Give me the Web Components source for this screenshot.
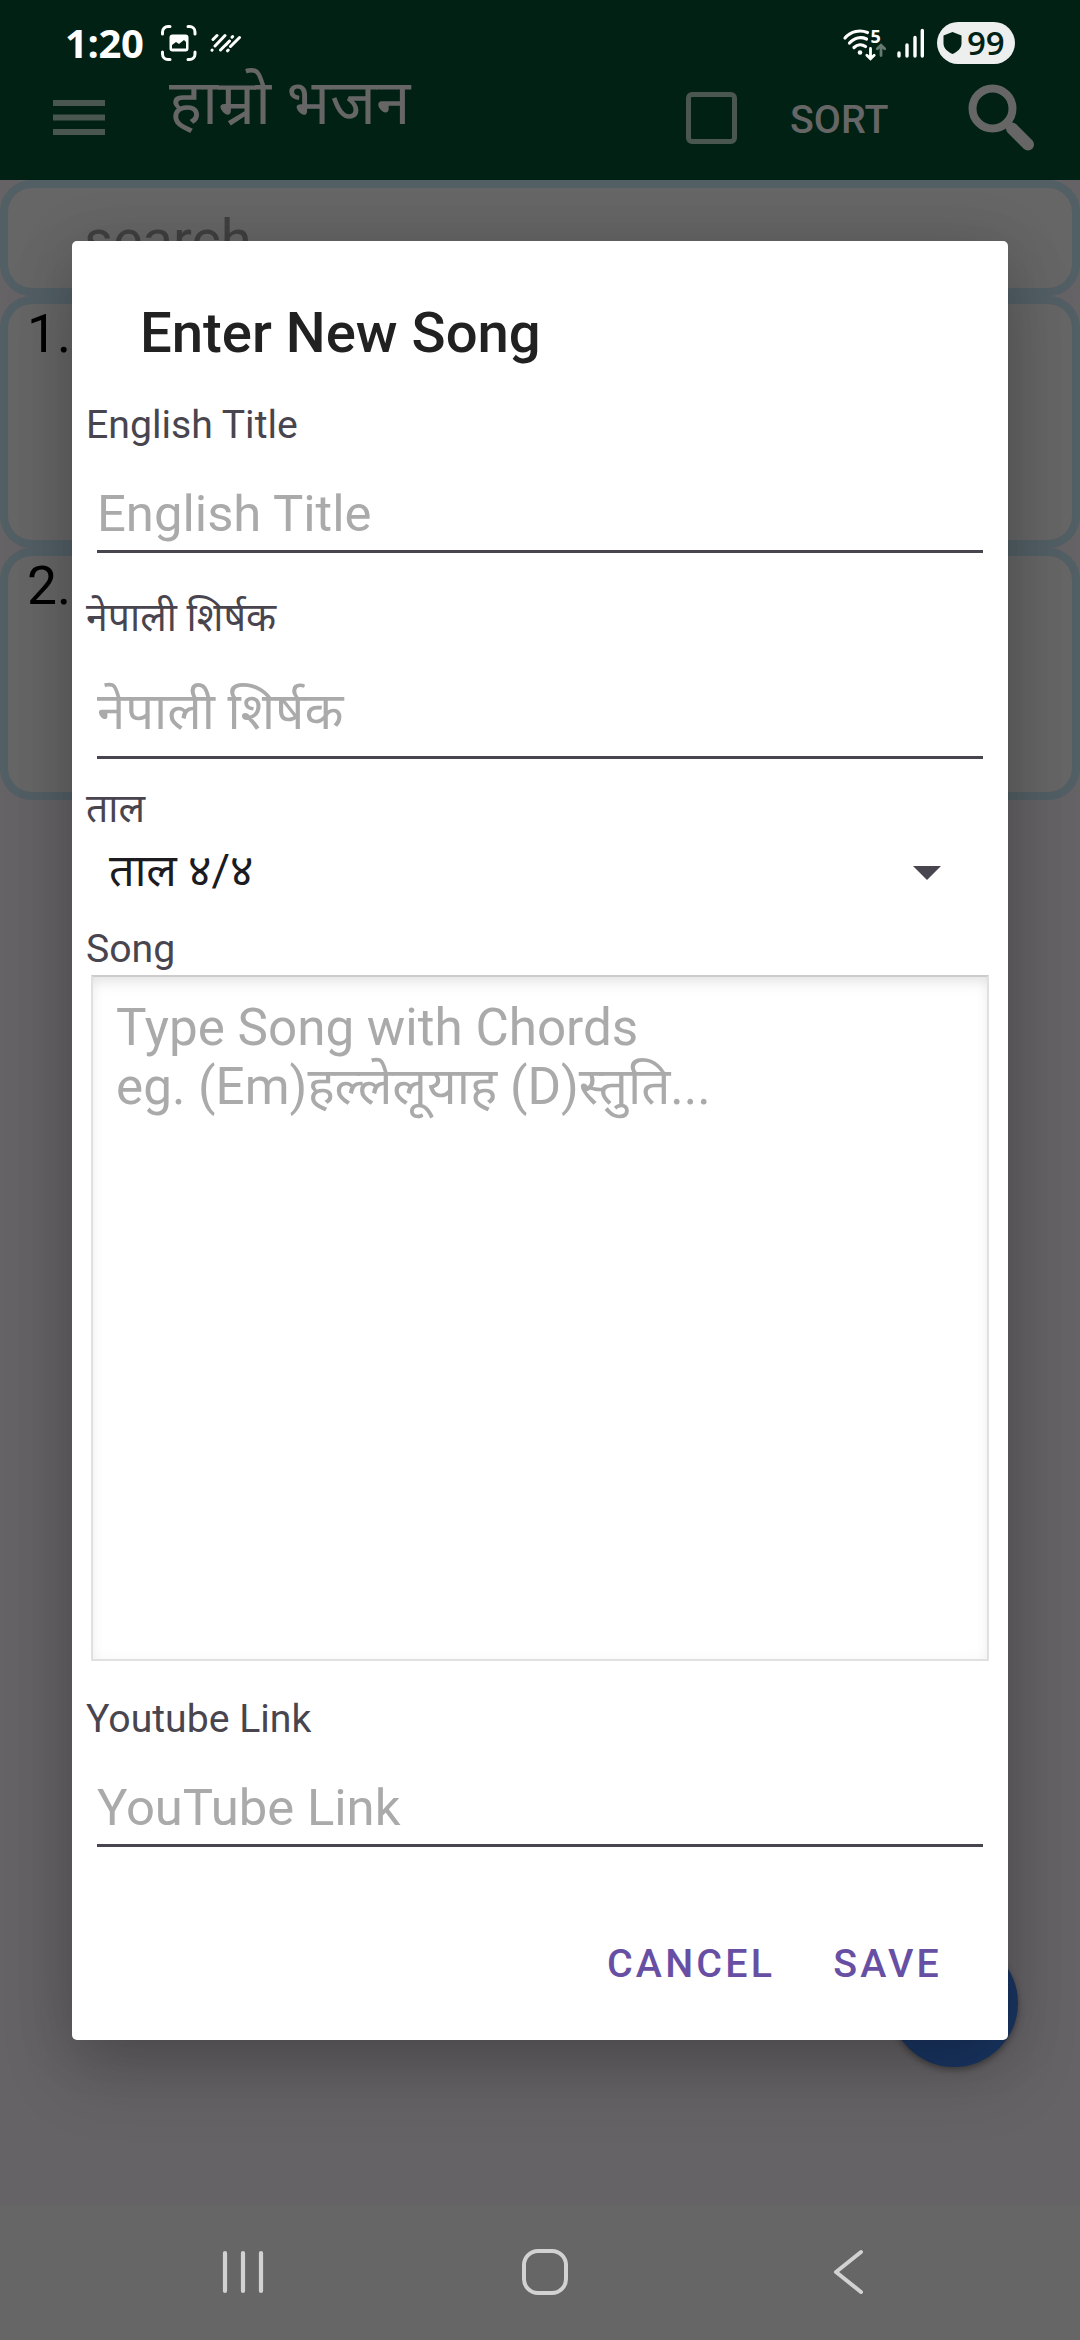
<!DOCTYPE html>
<html lang="ne">
<head>
<meta charset="utf-8">
<title>हाम्रो भजन</title>
<style>
    html, body {
        margin: 0;
        width: 1080px;
        height: 2340px;
        overflow: hidden;
        font-family: Roboto, "Noto Sans Devanagari", "Noto Sans", sans-serif;
    }
</style>
</head>
<body>
<song-app>
    <status-bar slot="status" time="1:20" battery="99"></status-bar>
    <app-bar slot="bar">हाम्रो भजन<span slot="action">SORT</span></app-bar>
    <list-card kind="search">search</list-card>
    <list-card>1.</list-card>
    <list-card>2.</list-card>
    <song-dialog slot="dialog">
        <span slot="title">Enter New Song</span>
        <text-field label="English Title">English Title</text-field>
        <text-field label="नेपाली शिर्षक" tall>नेपाली शिर्षक</text-field>
        <select-field label="ताल">ताल ४/४</select-field>
        <text-box label="Song">Type Song with Chords<br>eg. (Em)हल्लेलूयाह (D)स्तुति...</text-box>
        <text-field label="Youtube Link" last>YouTube Link</text-field>
        <dialog-button slot="actions">CANCEL</dialog-button>
        <dialog-button slot="actions">SAVE</dialog-button>
    </song-dialog>
    <nav-bar slot="nav"></nav-bar>
</song-app>

<script>
"use strict"

class Base extends HTMLElement {
    constructor() {
        super()
        const template = document.createElement("template")
        template.innerHTML = this.render()
        const attachShadow = this.attachShadow({ mode: "open" })
        attachShadow.append(template.content.cloneNode(true))
    }
    render() {
        return "<slot></slot>"
    }
}

class SongApp extends Base {
    render() {
        return `
            <style>
                :host {
                    display: flex;
                    flex-direction: column;
                    position: relative;
                    width: 1080px;
                    height: 2340px;
                    overflow: hidden;
                    background: #666366;
                }
                .list {
                    flex: 1;
                    display: flex;
                    flex-direction: column;
                }
                .status {
                    position: absolute;
                    top: 0;
                    left: 0;
                    right: 0;
                }
                .fab {
                    position: absolute;
                    left: 890px;
                    top: 1939px;
                    width: 128px;
                    height: 128px;
                    border-radius: 50%;
                    background: #1a3663;
                    box-shadow: 0 3px 6px rgba(0, 0, 0, .35);
                }
                .dialog {
                    position: absolute;
                    left: 72px;
                    right: 72px;
                    top: 241px;
                }
            </style>
            <slot name="bar"></slot>
            <div class="list"><slot></slot></div>
            <slot name="nav"></slot>
            <div class="status"><slot name="status"></slot></div>
            <div class="fab"></div>
            <div class="dialog"><slot name="dialog"></slot></div>
        `
    }
}

class StatusBar extends Base {
    render() {
        return `
            <style>
                :host {
                    display: flex;
                    align-items: center;
                    height: 86px;
                    padding: 0 65px 0 65px;
                    box-sizing: border-box;
                    color: #fff;
                }
                svg {
                    display: block;
                }
                .time {
                    width: 96px;
                    font: 700 40px/50px "Open Sans", "Noto Sans", sans-serif;
                    letter-spacing: -.4px;
                }
                .space {
                    flex: 1;
                }
                .pill {
                    display: flex;
                    align-items: center;
                    width: 78px;
                    height: 42px;
                    margin-left: 13px;
                    padding-left: 6px;
                    box-sizing: border-box;
                    border-radius: 21px;
                    background: #ecefed;
                    color: #002114;
                    font: 600 33px/42px "Open Sans", "Noto Sans", sans-serif;
                }
                .pill svg {
                    margin-right: 5px;
                }
            </style>
            <div class="time"></div>
            <svg width="36" height="36" viewBox="0 0 36 36" fill="none" stroke="#fff" stroke-width="3" stroke-linecap="round">
                <path d="M1.5 9V7a5.500 5.500 0 0 1 5.500-5.500H9M27 1.500h1.500a5.500 5.500 0 0 1 5.500 5.500V9M34 27v2a5.500 5.500 0 0 1-5.500 5.500H27M9 34.500H7A5.500 5.500 0 0 1 1.500 29V27"/>
                <rect x="8.500" y="9.500" width="19" height="17" rx="3" fill="#fff" stroke="none"/>
                <path d="M11 23.500v-3.500l4-3 3 2 5-4 2 2v6.500z" fill="#002114" stroke="none"/>
            </svg>
            <svg style="margin-left:13px" width="32" height="20" viewBox="0 0 32 20" stroke="#fff" stroke-width="3" stroke-linecap="round">
                <path d="M3 6.500 7 2.500M5 13 15 2.500M2 17.200l.1-.1M10.500 17 19.500 8M22 4.200l.6-.6M17.500 17.800l.7-.7M20.500 13.500 29.500 4.500M16 11.800l3.500-3.800" fill="none"/>
            </svg>
            <div class="space"></div>
            <svg width="46" height="36" viewBox="0 0 46 36" fill="none">
                <g stroke="#fff" stroke-width="3.200" stroke-linecap="round">
                    <path d="M3 13C9 6 18 4.500 25.500 7.500M7.500 18C12.500 12.500 19 11.500 24.500 14M12 22.500c3.500-3.500 8-3.500 11.500-1"/>
                    <path d="M28.500 23.500v10M24.800 30.200l3.700 3.600 3.700-3.600" stroke-width="2.800"/>
                    <path d="M39 30.500v-10M35.300 23.800l3.700-3.600 3.700 3.600" stroke="#667a72" stroke-width="2.800"/>
                </g>
                <circle cx="18" cy="27.500" r="2.300" fill="#fff"/>
                <text x="28.500" y="17.500" font-size="18" font-weight="700" font-family="Open Sans" fill="#fff">5</text>
            </svg>
            <svg style="margin-left:8px" width="28" height="32" viewBox="0 0 28 32" stroke="#fff" stroke-width="3.400" stroke-linecap="round">
                <path d="M3 26v3M11 18v11M19 10.500v18.500M26.300 3.500v25.500"/>
            </svg>
            <div class="pill">
                <svg width="19" height="22" viewBox="0 0 19 22"><path d="M9.500 0 18.500 3.500v8c0 5-4.500 8.500-9 10.500C5 20 .5 16.500.5 11.500v-8z" fill="#002114"/></svg>
                <span class="battery"></span>
            </div>
        `
    }
    connectedCallback() {
        this.shadowRoot.querySelector(".time").textContent = this.getAttribute("time")
        this.shadowRoot.querySelector(".battery").textContent = this.getAttribute("battery")
    }
}

class AppBar extends Base {
    render() {
        return `
            <style>
                :host {
                    display: flex;
                    align-items: flex-start;
                    height: 180px;
                    box-sizing: border-box;
                    padding: 0 45px 0 53px;
                    background: #002114;
                    color: #666;
                }
                svg {
                    display: block;
                }
                .title {
                    flex: 1;
                    margin: 66px 0 0 64px;
                    font-size: 62px;
                    line-height: 74px;
                    white-space: nowrap;
                }
                .box {
                    width: 51px;
                    height: 52px;
                    margin-top: 92px;
                    box-sizing: border-box;
                    border: 5.500px solid #4a5650;
                    border-radius: 6px;
                }
                .sort {
                    width: 99px;
                    margin: 97px 79px 0 53px;
                    font-size: 39.400px;
                    font-weight: 500;
                    line-height: 46px;
                }
            </style>
            <svg style="margin-top:100px" width="52" height="36" fill="#4a5650">
                <path d="M0 0h52v6H0zM0 14.500h52v6H0zM0 29h52v6H0z"/>
            </svg>
            <div class="title"><slot></slot></div>
            <div class="box"></div>
            <div class="sort"><slot name="action"></slot></div>
            <svg style="margin-top:84px" width="67" height="68" viewBox="0 0 67 68" fill="none" stroke="#666">
                <circle cx="24.500" cy="24.500" r="20" stroke-width="8"/>
                <path d="M40 40 44 44" stroke-width="8"/>
                <path d="M44 44.500 60 60.500" stroke-width="12" stroke-linecap="round"/>
            </svg>
        `
    }
}

class ListCard extends Base {
    render() {
        return `
            <style>
                :host {
                    display: block;
                    height: 252px;
                    box-sizing: border-box;
                    padding: 0 19px;
                    border: 8px solid #525f65;
                    border-radius: 32px;
                    background: #666;
                    color: #000;
                    font-size: 53.400px;
                    line-height: 60px;
                }
                :host([kind="search"]) {
                    height: 116px;
                    padding: 20px 76px;
                    color: #404040;
                    font-size: 56px;
                    line-height: 64px;
                }
            </style>
            <slot></slot>
        `
    }
}

class SongDialog extends Base {
    render() {
        return `
            <style>
                :host {
                    display: block;
                    height: 1799px;
                    box-sizing: border-box;
                    padding: 59px 14px 0;
                    border-radius: 5px;
                    background: #fff;
                    box-shadow: 0 34px 70px rgba(0, 0, 0, .18), 0 4px 60px rgba(0, 0, 0, .14);
                }
                .title {
                    padding-left: 54px;
                    margin-bottom: 35px;
                    color: #212121;
                    font-size: 56.250px;
                    font-weight: 500;
                    line-height: 66px;
                }
                .actions {
                    display: flex;
                    justify-content: flex-end;
                    gap: 58px;
                    margin-top: 93px;
                    padding-right: 52px;
                }
            </style>
            <div class="title"><slot name="title"></slot></div>
            <slot></slot>
            <div class="actions"><slot name="actions"></slot></div>
        `
    }
}

const labelStyle = `
    .label {
        height: 47px;
        color: #49454f;
        font-size: 39.200px;
        line-height: 49px;
        white-space: nowrap;
    }
`

class Field extends Base {
    connectedCallback() {
        this.shadowRoot.querySelector(".label").textContent = this.getAttribute("label")
    }
}

class TextField extends Field {
    render() {
        return `
            <style>
                ${labelStyle}
                :host {
                    display: block;
                    margin-bottom: 41px;
                }
                :host([tall]) {
                    margin-bottom: 26px;
                }
                :host([last]) {
                    margin-bottom: 0;
                }
                .input {
                    margin: 0 11px;
                    padding: 36px 0 6px;
                    border-bottom: 3px solid #49454f;
                    color: #aaa;
                    font-size: 50.800px;
                    line-height: 60px;
                }
                :host([tall]) .input {
                    padding: 41px 0 14px;
                }
            </style>
            <div class="label"></div>
            <div class="input"><slot></slot></div>
        `
    }
}

class SelectField extends Field {
    render() {
        return `
            <style>
                ${labelStyle}
                :host {
                    display: block;
                    margin-bottom: 15px;
                }
                .value {
                    display: flex;
                    align-items: center;
                    justify-content: space-between;
                    height: 78px;
                    padding: 0 53px 0 23px;
                    color: #1c1b1f;
                    font-size: 45px;
                    line-height: 54px;
                }
            </style>
            <div class="label"></div>
            <div class="value">
                <span><slot></slot></span>
                <svg width="28" height="14" viewBox="0 0 28 14" style="margin-top:4px"><path d="M0 0h28L14 14z" fill="#49454f"/></svg>
            </div>
        `
    }
}

class TextBox extends Field {
    render() {
        return `
            <style>
                ${labelStyle}
                :host {
                    display: block;
                    margin-bottom: 34px;
                }
                .area {
                    height: 686px;
                    margin: 3px 5px 0;
                    box-sizing: border-box;
                    padding: 21px 23px;
                    border: 2px solid #e0e0e0;
                    border-top-color: #ccc;
                    box-shadow: inset 0 10px 16px -6px rgba(0, 0, 0, .1), inset 0 0 14px rgba(0, 0, 0, .04);
                    color: #aaa;
                    font-size: 51.200px;
                    line-height: 59px;
                }
            </style>
            <div class="label"></div>
            <div class="area"><slot></slot></div>
        `
    }
}

class DialogButton extends Base {
    render() {
        return `
            <style>
                :host {
                    display: block;
                    color: #6750a4;
                    font-size: 39.400px;
                    font-weight: 500;
                    line-height: 47px;
                    letter-spacing: 3.200px;
                }
            </style>
            <slot></slot>
        `
    }
}

class NavBar extends Base {
    render() {
        return `
            <style>
                :host {
                    display: flex;
                    align-items: center;
                    justify-content: space-between;
                    height: 135px;
                    box-sizing: border-box;
                    padding: 0 215px 2px 220px;
                    background: #666;
                }
            </style>
            <svg width="46" height="46" viewBox="0 0 46 46" stroke="#d2d2d2" stroke-width="4.200" stroke-linecap="round">
                <path d="M5 4v38M23 4v38M41 4v38"/>
            </svg>
            <svg style="margin-right:7px" width="48" height="48" viewBox="0 0 48 48" fill="none" stroke="#d2d2d2" stroke-width="4">
                <rect x="3" y="3" width="42" height="42" rx="14"/>
            </svg>
            <svg width="34" height="48" viewBox="0 0 34 48" fill="none" stroke="#d2d2d2" stroke-width="4" stroke-linecap="round" stroke-linejoin="round">
                <path d="M30 4 5 24l25 20"/>
            </svg>
        `
    }
}

customElements.define("song-app", SongApp)
customElements.define("status-bar", StatusBar)
customElements.define("app-bar", AppBar)
customElements.define("list-card", ListCard)
customElements.define("song-dialog", SongDialog)
customElements.define("text-field", TextField)
customElements.define("select-field", SelectField)
customElements.define("text-box", TextBox)
customElements.define("dialog-button", DialogButton)
customElements.define("nav-bar", NavBar)
</script>
</body>
</html>
